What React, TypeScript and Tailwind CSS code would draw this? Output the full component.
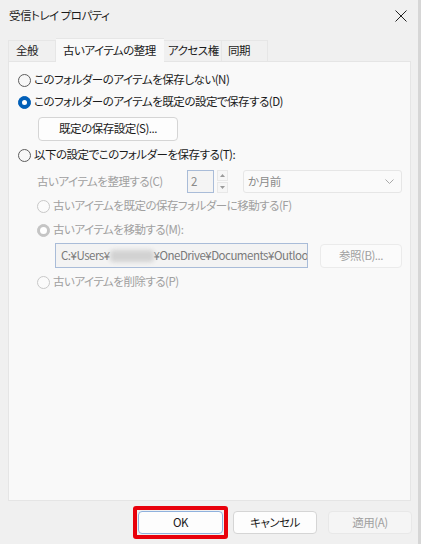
import React from 'react';

const font = {
    fontFamily: '"Noto Sans CJK JP", "Noto Sans", sans-serif',
    fontFeatureSettings: '"palt"',
    letterSpacing: '-0.5px',
} as React.CSSProperties;

type RadioProps = { checked?: boolean; disabled?: boolean; label: string };

const Radio: React.FC<RadioProps> = ({ checked, disabled, label }) => {
    const ring = checked
        ? disabled
            ? 'bg-[#c5c5c5] border-[#c5c5c5]'
            : 'bg-[#005fb8] border-[#005fb8]'
        : disabled
        ? 'bg-[#fbfbfb] border-[#c8c8c8]'
        : 'bg-[#f7f7f7] border-[#5d5d5d]';
    return (
        <div className="flex items-center h-[22px] whitespace-nowrap">
            <span className={`shrink-0 w-[13px] h-[13px] rounded-full border flex items-center justify-center ${ring}`}>
                {checked && <span className={`rounded-full bg-white ${disabled ? 'w-[7px] h-[7px]' : 'w-[5px] h-[5px]'}`} />}
            </span>
            <span className={`ml-[3px] text-[11.5px] ${disabled ? 'text-[#a0a0a0]' : 'text-[#1b1b1b]'}`}>{label}</span>
        </div>
    );
};

const App: React.FC = () => {
    return (
        <div className="w-[421px] h-[544px] bg-[#f0f0f0] flex flex-col border-r-[3px] border-r-[#d6d6d6] overflow-hidden" style={font}>
            {/* タイトルバー */}
            <div className="h-[31px] flex items-center justify-between pl-[9px] pr-[10px]">
                <span className="text-[11.5px] text-[#1b1b1b]">受信トレイ プロパティ</span>
                <svg width="12" height="12" viewBox="0 0 12 12" className="mr-[1px]">
                    <path d="M0.5 0.5L11.5 11.5M11.5 0.5L0.5 11.5" stroke="#222" strokeWidth="1" />
                </svg>
            </div>

            {/* タブ */}
            <div className="flex items-end h-[30px] pl-[8px] whitespace-nowrap">
                <div className="shrink-0 h-[21px] w-[48px] flex items-center pl-[7px] text-[11.5px] text-[#1b1b1b] bg-[#f0f0f0] border border-b-0 border-[#e6e6e6]">全般</div>
                <div className="shrink-0 h-[24px] w-[108px] flex items-center pl-[7px] text-[11.5px] text-[#1b1b1b] bg-[#f9f9f9] border-t border-[#e6e6e6] -mb-[1px] relative z-10">古いアイテムの整理</div>
                <div className="shrink-0 h-[21px] w-[58px] flex items-center pl-[4px] text-[11.5px] text-[#1b1b1b] bg-[#f0f0f0] border border-b-0 border-l-0 border-[#e6e6e6]">アクセス権</div>
                <div className="shrink-0 h-[21px] w-[46px] flex items-center pl-[6px] text-[11.5px] text-[#1b1b1b] bg-[#f0f0f0] border border-b-0 border-l-0 border-[#e6e6e6]">同期</div>
            </div>

            {/* パネル */}
            <div className="mx-[8px] w-[403px] h-[440px] bg-[#f9f9f9] border border-[#e5e5e5] flex flex-col pt-[7px] pl-[9px]">
                <Radio label="このフォルダーのアイテムを保存しない(N)" />
                <Radio checked label="このフォルダーのアイテムを既定の設定で保存する(D)" />
                <div className="mt-[4px] ml-[20px] w-[140px] h-[24px] bg-[#fdfdfd] border border-[#d5d5d5] rounded-[4px] flex items-center justify-center text-[11.5px] text-[#1b1b1b]">
                    既定の保存設定(S)...
                </div>
                <div className="mt-[3px]">
                    <Radio label="以下の設定でこのフォルダーを保存する(T):" />
                </div>

                <div className="mt-[4px] ml-[19px] flex items-center h-[23px] whitespace-nowrap">
                    <span className="shrink-0 text-[11.5px] text-[#a0a0a0] w-[150px]">古いアイテムを整理する(C)</span>
                    <div className="shrink-0 w-[27px] h-[23px] border border-[#a9bcd8] bg-[#f4f4f4] flex items-center pl-[3px] text-[11.5px] text-[#8a8a8a]">2</div>
                    <div className="shrink-0 ml-[3px] flex flex-col gap-[1px]">
                        <div className="w-[11px] h-[11px] bg-[#f6f6f6] border border-[#e8e8e8] flex items-center justify-center">
                            <svg width="5" height="3" viewBox="0 0 5 3"><path d="M0 3L2.5 0L5 3Z" fill="#9a9a9a" /></svg>
                        </div>
                        <div className="w-[11px] h-[11px] bg-[#f6f6f6] border border-[#e8e8e8] flex items-center justify-center">
                            <svg width="5" height="3" viewBox="0 0 5 3"><path d="M0 0L2.5 3L5 0Z" fill="#9a9a9a" /></svg>
                        </div>
                    </div>
                    <div className="shrink-0 ml-[15px] w-[159px] h-[23px] bg-[#fafafa] border border-[#e6e6e6] rounded-[3px] flex items-center justify-between pl-[4px] pr-[7px]">
                        <span className="text-[11.5px] text-[#8a8a8a]">か月前</span>
                        <svg width="9" height="5" viewBox="0 0 9 5"><path d="M0.5 0.5L4.5 4.5L8.5 0.5" stroke="#a8a8a8" fill="none" /></svg>
                    </div>
                </div>

                <div className="mt-[2px] ml-[19px]">
                    <Radio disabled label="古いアイテムを既定の保存フォルダーに移動する(F)" />
                </div>
                <div className="mt-[2px] ml-[19px]">
                    <Radio disabled checked label="古いアイテムを移動する(M):" />
                </div>
                <div className="mt-[2px] ml-[37px] flex items-center">
                    <div className="shrink-0 w-[253px] h-[25px] border border-[#a9bcd8] bg-[#f3f3f3] flex items-center pl-[5px] text-[11.5px] text-[#7a7a7a] whitespace-nowrap overflow-hidden">
                        <span className="shrink-0">C:¥Users¥</span>
                        <span className="shrink-0 inline-block w-[44px] h-[12px] bg-[#d2d2d2] blur-[2px] rounded" />
                        <span className="shrink-0">¥OneDrive¥Documents¥Outlook</span>
                    </div>
                    <div className="shrink-0 ml-[12px] w-[82px] h-[24px] bg-[#fbfbfb] border border-[#ebebeb] rounded-[4px] flex items-center justify-center text-[11.5px] text-[#a0a0a0]">
                        参照(B)...
                    </div>
                </div>
                <div className="mt-[3px] ml-[19px]">
                    <Radio disabled label="古いアイテムを削除する(P)" />
                </div>
            </div>

            {/* ボタン */}
            <div className="flex items-center mt-[5px] pl-[133px]">
                <div className="w-[95px] h-[33px] border-[4px] border-[#e8000b] rounded-[3px] flex items-center justify-center">
                    <div className="w-[85px] h-[23px] bg-[#fdfdfd] border border-[#8fb1dd] rounded-[4px] flex items-center justify-center text-[11.5px] text-[#1b1b1b]">OK</div>
                </div>
                <div className="ml-[5px] w-[84px] h-[23px] bg-[#fdfdfd] border border-[#d5d5d5] rounded-[4px] flex items-center justify-center text-[11.5px] text-[#1b1b1b]">キャンセル</div>
                <div className="ml-[11px] w-[84px] h-[23px] bg-[#f5f5f5] border border-[#e8e8e8] rounded-[4px] flex items-center justify-center text-[11.5px] text-[#a0a0a0]">適用(A)</div>
            </div>
        </div>
    );
};

export default App;
